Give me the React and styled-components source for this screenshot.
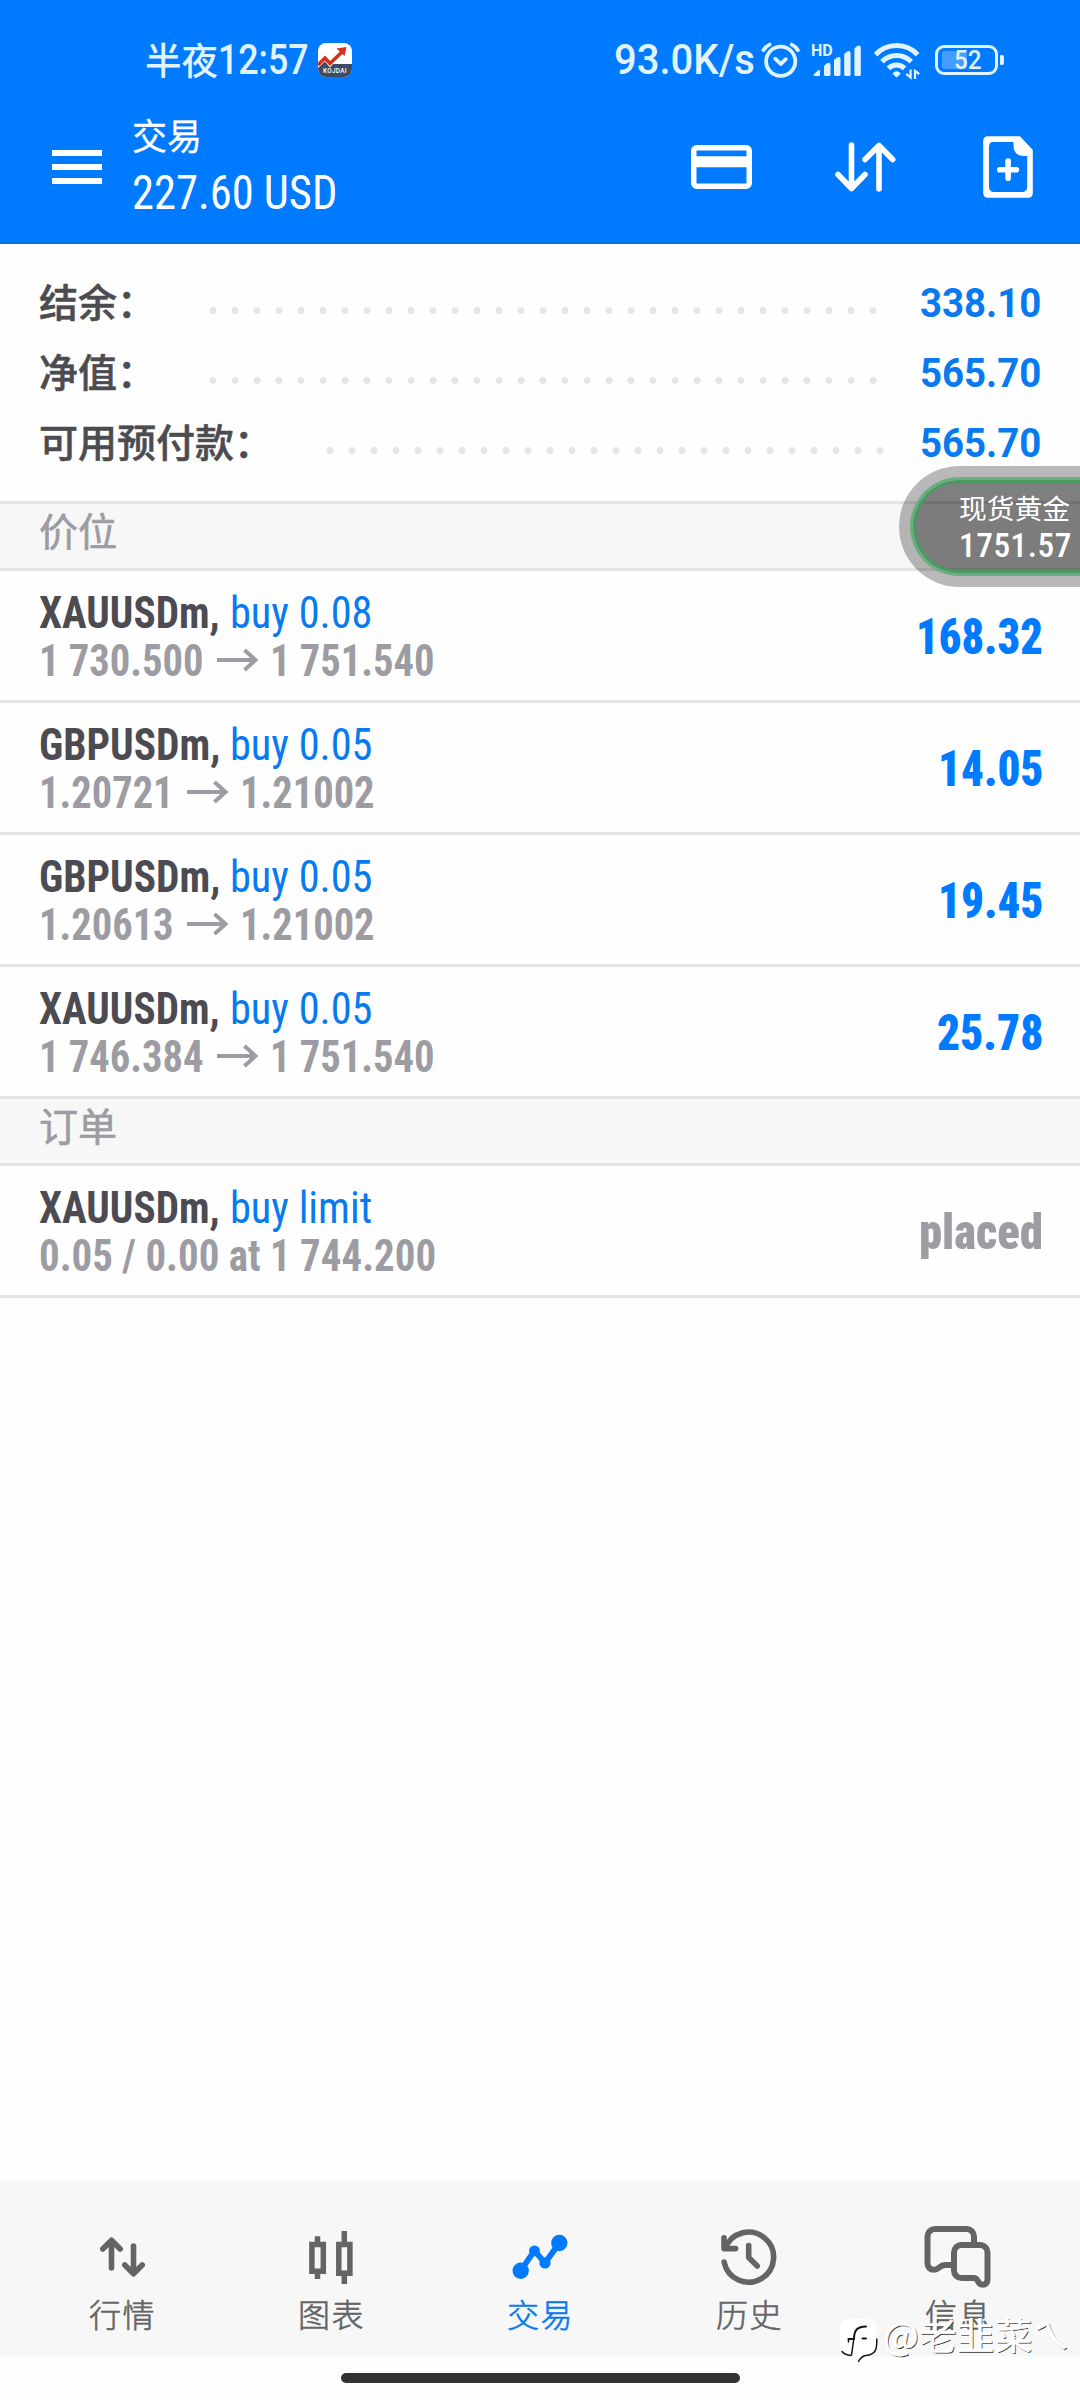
import React, { useLayoutEffect, useRef, useState } from "react";
import styled, { createGlobalStyle } from "styled-components";

const BLUE = "#007aff";
const INK_BLUE = "#087af0";
const GREY = "#9c9ca2";
const LINE = "#e4e4e4";
const PANEL = "#f7f7f7";
const CJK = `"Noto Sans CJK SC", sans-serif`;

const GlobalStyle = createGlobalStyle`
  * { box-sizing: border-box; }
  body { margin: 0; background: #fefefe; font-family: Roboto, ${CJK}; }
  svg { display: block; flex: none; overflow: visible; }
`;

const Screen = styled.div`
  position: relative;
  width: 1080px;
  height: 2400px;
  display: flex;
  flex-direction: column;
  overflow: hidden;
  background: #fefefe;
`;

/* Text that is squeezed or stretched horizontally to an exact width. */
const FitBox = styled.span`
  display: block;
  flex: none;
  width: ${(p) => p.$w}px;
  white-space: pre;
`;
const FitInner = styled.span`
  display: inline-block;
  transform-origin: 0 50%;
`;
function Fit({ w, children, as: Box = FitBox, ...rest }) {
  const ref = useRef(null);
  const [scale, setScale] = useState(1);
  useLayoutEffect(() => {
    setScale(w / ref.current.offsetWidth);
  }, [w, children]);
  return (
    <Box $w={w} {...rest}>
      <FitInner ref={ref} style={{ transform: `scaleX(${scale})` }}>{children}</FitInner>
    </Box>
  );
}

const Gap = styled.div`
  flex: none;
  width: ${(p) => p.$w}px;
`;
const Spacer = styled.div`
  flex: 1;
`;

const Header = styled.header`
  flex: none;
  height: 244px;
  background: ${BLUE};
  border-bottom: 2px solid #0d6fdc;
  color: #fff;
`;
const StatusBar = styled.div`
  display: flex;
  align-items: center;
  height: 100px;
  padding: 20px 82px 0 145px;
  color: #e0f3ff;
`;
const StatusCjk = styled(FitBox)`
  font: 500 37px/44px ${CJK};
  padding-bottom: 3px;
`;
const StatusLatin = styled(FitBox)`
  font-weight: 500;
  font-size: 42px;
  line-height: 44px;
  font-stretch: 90%;
  margin-right: ${(p) => p.$gap || 0}px;
`;
const Battery = styled.div`
  position: relative;
  width: 63px;
  height: 30px;
  margin-left: 14px;
  border: 3px solid #e0f3ff;
  border-radius: 9px;
  display: flex;
  justify-content: center;
  align-items: center;
  &::before {
    content: "";
    position: absolute;
    left: 4px;
    top: 3px;
    width: 25px;
    height: 18px;
    border-radius: 3px;
    background: rgba(255, 255, 255, 0.27);
  }
  &::after {
    content: "";
    position: absolute;
    left: 62px;
    top: 7px;
    width: 4px;
    height: 10px;
    border-radius: 1px 2px 2px 1px;
    background: #e0f3ff;
  }
`;
const BatteryText = styled(FitBox)`
  position: relative;
  left: 1px;
  font-weight: 500;
  font-size: 26px;
  line-height: 26px;
`;

const TitleBar = styled.div`
  display: flex;
  align-items: center;
  height: 134px;
  padding: 0 47px 0 52px;
`;
const MenuIcon = styled.div`
  display: flex;
  flex-direction: column;
  gap: 8px;
  width: 50px;
  margin-right: 30px;
  & > i {
    height: 6px;
    background: #fff;
  }
`;
const TitleText = styled.div`
  display: flex;
  flex-direction: column;
  gap: 11px;
  padding-top: 1px;
`;
const Title = styled(FitBox)`
  font: 400 36px/40px ${CJK};
  -webkit-text-stroke: 0.3px currentColor;
`;
const Amount = styled(FitBox)`
  font-weight: 450;
  font-size: 48px;
  line-height: 56px;
  font-stretch: 75%;
`;
const Actions = styled.div`
  display: flex;
  align-items: center;
  gap: 83px;
  margin-left: auto;
`;

const Summary = styled.section`
  flex: none;
  height: 257px;
  padding: 21px 39px 0;
`;
const SummaryRow = styled.div`
  display: flex;
  align-items: center;
  height: 70px;
`;
const SummaryLabel = styled.span`
  font: 500 39px/56px ${CJK};
  color: #4c4c50;
  -webkit-text-stroke: 0.5px currentColor;
  white-space: nowrap;
`;
const Dots = styled.span`
  flex: none;
  width: ${(p) => p.$count * 22}px;
  height: 7px;
  margin: 21px ${(p) => p.$gap}px 0 auto;
  background: radial-gradient(circle at 11px 3.5px, #e5e5e5 3.1px, transparent 3.9px) 0 0 / 22px 7px repeat-x;
`;
const SummaryValue = styled(FitBox)`
  padding-top: 7px;
  font-weight: 700;
  font-size: 40px;
  line-height: 48px;
  color: ${INK_BLUE};
`;

const SectionTitle = styled.h2`
  flex: none;
  margin: 0;
  height: ${(p) => (p.$first ? 70 : 67)}px;
  padding-left: 39px;
  border-top: ${(p) => (p.$first ? 3 : 0)}px solid ${LINE};
  border-bottom: 3px solid ${LINE};
  background: ${PANEL};
  font: 400 39px/50px ${CJK};
  color: ${GREY};
  -webkit-text-stroke: 0.6px currentColor;
`;

const Row = styled.div`
  flex: none;
  display: flex;
  justify-content: space-between;
  height: 132px;
  padding: 19px 37px 0 39px;
  border-bottom: 3px solid ${LINE};
  font-stretch: 75%;
`;
const Line = styled.div`
  display: flex;
  align-items: center;
  height: 48px;
  font-size: 43.5px;
  line-height: 48px;
`;
const Symbol = styled(FitBox)`
  font-weight: 700;
  color: #4b4b51;
`;
const Side = styled(FitBox)`
  margin-left: 10px;
  font-weight: 450;
  color: ${INK_BLUE};
`;
const Price = styled(FitBox)`
  font-weight: 700;
  color: ${GREY};
`;
const Profit = styled(FitBox)`
  height: 94px;
  font-weight: 900;
  font-size: 50px;
  line-height: 94px;
  color: ${(p) => (p.$muted ? GREY : BLUE)};
`;
const ArrowSvg = styled.svg`
  margin: 0 12px 5px 13px;
`;

const Bubble = styled.aside`
  position: absolute;
  right: 0;
  top: 466px;
  width: 181px;
  height: 121px;
  padding: 11px 0 11px 11px;
  border-radius: 61px 0 0 61px;
  background: rgba(0, 0, 0, 0.27);
`;
const BubbleRing = styled.div`
  height: 99px;
  border: 3px solid #6bae82;
  border-right: 0;
  border-radius: 50px 0 0 50px;
`;
const BubbleBody = styled.div`
  height: 93px;
  padding: 6px 0 0 43px;
  border: 3px solid #4b9863;
  border-right: 0;
  border-radius: 47px 0 0 47px;
  background: rgba(0, 0, 0, 0.31);
  color: #fff;
`;
const BubbleName = styled(FitBox)`
  font: 400 27.5px/36px ${CJK};
`;
const BubblePrice = styled(FitBox)`
  margin-top: 2px;
  font-weight: 500;
  font-size: 34px;
  line-height: 36px;
  font-stretch: 80%;
  letter-spacing: 0.5px;
`;

const Nav = styled.nav`
  flex: none;
  display: grid;
  grid-template-columns: repeat(5, 209px);
  justify-content: center;
  height: 175px;
  margin-top: auto;
  background: ${PANEL};
  box-shadow: 0 0 2px #f4f4f4;
`;
const NavItem = styled.a`
  display: flex;
  flex-direction: column;
  align-items: center;
  padding-top: 44px;
  color: ${(p) => (p.$active ? INK_BLUE : "#646464")};
`;
const NavLabel = styled.span`
  margin-top: 2px;
  font: 300 32px/44px ${CJK};
  letter-spacing: 1.5px;
  padding-left: 1px;
  -webkit-text-stroke: 0.6px currentColor;
`;
const HomeArea = styled.div`
  flex: none;
  height: 44px;
  padding-top: 17px;
`;
const HomeBar = styled.div`
  width: 399px;
  height: 10px;
  margin: 0 auto;
  border-radius: 5px;
  background: #323232;
`;

const Watermark = styled.div`
  position: absolute;
  left: 840px;
  top: 2318px;
  display: flex;
  align-items: flex-start;
  gap: 5px;
`;
const WatermarkText = styled(FitBox)`
  margin-top: -6px;
  font: 400 37px/44px ${CJK};
  color: #fff;
  -webkit-text-stroke: 0.5px #fff;
  text-shadow: 1px 1px 0 rgba(20, 20, 20, 0.9);
`;

const Alarm = () => (
  <svg width="42" height="40" fill="none" stroke="currentColor" strokeWidth="3.8" strokeLinecap="round" strokeLinejoin="round">
    <circle cx="20.7" cy="21.3" r="14.6" />
    <path d="M3.5 10.2Q5.5 6.5 9.5 4.6M31.8 4.6Q35.8 6.5 37.9 10.2M15.3 18.7L20.7 24L25.8 19.2" />
  </svg>
);
const HdText = styled.text`
  font: 700 16px Roboto, sans-serif;
`;
const Signal = () => (
  <svg width="54" height="40" fill="currentColor">
    <HdText x="1" y="16.3">HD</HdText>
    <path d="M3.5 34.5L8 30.5Q10 29.5 10 31V34.5Q10 36 8.5 36H5Q3.5 36 3.5 34.5zM14 26Q17 22.5 19 22.8Q20.5 23 20.5 25V34.5Q20.5 36 19 36H15.5Q14 36 14 34.5zM24 20Q27 16.8 29 17Q30.5 17 30.5 19V34.5Q30.5 36 29 36H25.5Q24 36 24 34.5zM34.2 14Q37 11 39 11Q40.6 11 40.6 13V34.5Q40.6 36 39 36H35.7Q34.2 36 34.2 34.5zM44.4 8.5Q47 5.6 49 5.6Q50.8 5.6 50.8 7.6V34.5Q50.8 36 49.3 36H46Q44.4 36 44.4 34.5z" />
  </svg>
);
const Wifi = () => (
  <svg width="48" height="40" fill="none" stroke="currentColor" strokeWidth="5">
    <path d="M2.6 14.8A28.4 28.4 0 0 1 44.6 14.8M9 21.8A20 20 0 0 1 38.2 21.8M15.4 28.4A11.6 11.6 0 0 1 31.6 28.4" />
    <path d="M19.5 33.4Q23.5 29 27.7 33.4L24.6 36.8Q23.5 37.6 22.5 36.8z" fill="currentColor" stroke="none" />
    <path d="M37.6 29.5V37.5L33.2 33.8M42 39V31L46.2 34" strokeWidth="2.2" />
  </svg>
);
const AppLogoText = styled.text`
  font: 500 6.4px Roboto, sans-serif;
  letter-spacing: 0.3px;
`;
const AppLogo = styled.svg`
  margin-left: 9px;
`;

const CardIcon = () => (
  <svg width="61" height="44" fill="none" stroke="#fff">
    <rect x="2.75" y="2.75" width="55.5" height="38.5" rx="3" strokeWidth="5.5" />
    <path d="M3 16.7H58" strokeWidth="11" />
  </svg>
);
const SortIcon = () => (
  <svg width="61" height="50" fill="none" stroke="#fff" strokeWidth="5.6" strokeLinecap="round" strokeLinejoin="round">
    <path d="M16.5 3V46M3 32.5L16.5 46.5L30 32.5M44 47V4M30 17.5L44 3.5L57.7 17.5" />
  </svg>
);
const FileIcon = styled(({ className }) => (
  <svg className={className} width="50" height="62" fill="none" stroke="#fff" strokeWidth="5.6" strokeLinecap="round" strokeLinejoin="round">
    <path d="M5 .3H37L49.8 14V57Q49.8 61.8 45 61.8H5Q.2 61.8 .2 57V5Q.2 .3 5 .3zM10 6Q6 6 6 11V50Q6 56 11 56H39Q44.2 56 44.2 50V20H41Q31 20 30.5 10V6z" fill="#fff" stroke="none" fillRule="evenodd" />
    <path d="M16.8 33.7H33.4M25.1 25V42.3" />
  </svg>
))`
  margin-left: 4px;
`;

const QuotesIcon = () => (
  <svg width="64" height="64" fill="none" stroke="currentColor" strokeWidth="5.6" strokeLinecap="round" strokeLinejoin="round">
    <path d="M21.5 43V15.5M12.8 24L21.5 15.2L30.2 24M43.5 21V48.5M34.8 40L43.5 48.8L52.2 40" />
  </svg>
);
const ChartIcon = () => (
  <svg width="64" height="64" fill="none" stroke="currentColor" strokeWidth="5.5">
    <path d="M12.9 19.5H24.3V46.2H12.9zM39.8 19.5H50.9V48.2H39.8z" />
    <path d="M18.5 11.3V18M18.5 48V54M45.3 6V18M45.3 50V59" />
  </svg>
);
const TradeIcon = () => (
  <svg width="64" height="64" fill={BLUE} stroke={BLUE}>
    <path d="M12.7 45.7L26.5 25.7L37 38L51.3 18" fill="none" strokeWidth="5.8" />
    <circle cx="12.7" cy="45.7" r="8.2" stroke="none" />
    <circle cx="26.5" cy="25.9" r="5.4" stroke="none" />
    <circle cx="37" cy="38" r="5.6" stroke="none" />
    <circle cx="51.3" cy="18" r="8.2" stroke="none" />
  </svg>
);
const HistoryIcon = () => (
  <svg width="64" height="64" fill="none" stroke="currentColor" strokeWidth="5.6" strokeLinecap="round" strokeLinejoin="round">
    <path d="M8.1 23.6A25 25 0 1 1 7.1 37M7 12.7V23.6H18.6M31.7 20.5V32.5L40.2 41" />
  </svg>
);
const ChatIcon = () => (
  <svg width="64" height="64" fill="none" stroke="currentColor" strokeWidth="6" strokeLinejoin="round">
    <path d="M28 40H19C13.5 40 13 44.8 8.2 44.8C4 44.8 1.5 42.5 1.5 38V11.5A7.5 7.5 0 0 1 9 4H40.5A7.5 7.5 0 0 1 48 11.5V20" />
    <path d="M35.5 20H54A7.5 7.5 0 0 1 61.5 27.5V54.5C61.5 58 59.5 59.8 56.8 59.8C50.5 59.8 53.5 53 47.5 53H35.5A7.5 7.5 0 0 1 28 45.5V27.5A7.5 7.5 0 0 1 35.5 20z" />
  </svg>
);
const WatermarkLogo = () => (
  <svg width="38" height="46" fill="none" stroke="#161616" strokeWidth="1.5" strokeLinecap="round">
    <path d="M12 1H26Q36.5 1 36.5 12V26Q36.5 38 25 38.5L18.500 44V38.5H12Q0 38 0 26V12Q0 1 12 1z" fill="#fff" stroke="none" />
    <path d="M14 20.5C14.200 12 17.500 8.5 26 8.5M8.500 21H14M22.500 20.5H26" strokeWidth="2" />
    <path d="M8.500 21V24M13.800 21L11.500 37M2 33.5Q5 37 11 37.500M36.800 21C37 31 36 36.500 26 37.500Q21.500 38 18.500 43.5" />
  </svg>
);

const summary = [
  { label: "结余：", value: "338.10", dots: 31, gap: 36.5 },
  { label: "净值：", value: "565.70", dots: 31, gap: 36.5 },
  { label: "可用预付款：", value: "565.70", dots: 26, gap: 29.5 },
];
const positions = [
  { symbol: "XAUUSDm,", side: "buy 0.08", from: "1 730.500", to: "1 751.540", pw: 165, profit: "168.32", w: 127 },
  { symbol: "GBPUSDm,", side: "buy 0.05", from: "1.20721", to: "1.21002", pw: 135, profit: "14.05", w: 105 },
  { symbol: "GBPUSDm,", side: "buy 0.05", from: "1.20613", to: "1.21002", pw: 135, profit: "19.45", w: 105 },
  { symbol: "XAUUSDm,", side: "buy 0.05", from: "1 746.384", to: "1 751.540", pw: 165, profit: "25.78", w: 106 },
];
const tabs = [
  { label: "行情", Icon: QuotesIcon },
  { label: "图表", Icon: ChartIcon },
  { label: "交易", Icon: TradeIcon, active: true },
  { label: "历史", Icon: HistoryIcon },
  { label: "信息", Icon: ChatIcon },
];

const PriceArrow = () => (
  <ArrowSvg width="41" height="22" fill="none" stroke={GREY} strokeWidth="4">
    <path d="M0 11H38M27.5 1L38.5 11L27.5 21" />
  </ArrowSvg>
);

export default function App() {
  return (
    <Screen>
      <GlobalStyle />
      <Header>
        <StatusBar>
          <Fit as={StatusCjk} w={73}>半夜</Fit>
          <Fit as={StatusLatin} w={91}>12:57</Fit>
          <AppLogo width="34" height="34">
            <clipPath id="logo"><rect width="34" height="34" rx="8" /></clipPath>
            <g clipPath="url(#logo)">
              <rect width="34" height="34" fill="#fff" />
              <path d="M0 22L7 15L12 20.5L24 9" fill="none" stroke="#d62f1c" strokeWidth="3.6" />
              <path d="M18.5 5.5L28.5 4L26.5 13z" fill="#d62f1c" />
              <path d="M0 25L7 18.5L12 24.5L15 21H34V34H0z" fill="#3d4c64" />
              <AppLogoText x="5" y="30" fill="#fff">KOJDAI</AppLogoText>
            </g>
          </AppLogo>
          <Spacer />
          <Fit as={StatusLatin} w={141} $gap={5}>93.0K/s</Fit>
          <Alarm />
          <Gap $w={8} />
          <Signal />
          <Gap $w={9} />
          <Wifi />
          <Battery>
            <Fit as={BatteryText} w={28}>52</Fit>
          </Battery>
        </StatusBar>
        <TitleBar>
          <MenuIcon><i /><i /><i /></MenuIcon>
          <TitleText>
            <Fit as={Title} w={70}>交易</Fit>
            <Fit as={Amount} w={205}>227.60 USD</Fit>
          </TitleText>
          <Actions>
            <CardIcon />
            <SortIcon />
            <FileIcon />
          </Actions>
        </TitleBar>
      </Header>

      <Summary>
        {summary.map((s) => (
          <SummaryRow key={s.label}>
            <SummaryLabel>{s.label}</SummaryLabel>
            <Dots $count={s.dots} $gap={s.gap} />
            <Fit as={SummaryValue} w={121}>{s.value}</Fit>
          </SummaryRow>
        ))}
      </Summary>

      <SectionTitle $first>价位</SectionTitle>
      {positions.map((p, i) => (
        <Row key={i}>
          <div>
            <Line>
              <Fit as={Symbol} w={181}>{p.symbol}</Fit>
              <Fit as={Side} w={142}>{p.side}</Fit>
            </Line>
            <Line>
              <Fit as={Price} w={p.pw}>{p.from}</Fit>
              <PriceArrow />
              <Fit as={Price} w={p.pw}>{p.to}</Fit>
            </Line>
          </div>
          <Fit as={Profit} w={p.w}>{p.profit}</Fit>
        </Row>
      ))}
      <SectionTitle>订单</SectionTitle>
      <Row>
        <div>
          <Line>
            <Fit as={Symbol} w={181}>XAUUSDm,</Fit>
            <Fit as={Side} w={142}>buy limit</Fit>
          </Line>
          <Line>
            <Fit as={Price} w={397}>0.05 / 0.00 at 1 744.200</Fit>
          </Line>
        </div>
        <Fit as={Profit} w={124} $muted>placed</Fit>
      </Row>

      <Bubble>
        <BubbleRing>
          <BubbleBody>
            <Fit as={BubbleName} w={111}>现货黄金</Fit>
            <Fit as={BubblePrice} w={113}>1751.57</Fit>
          </BubbleBody>
        </BubbleRing>
      </Bubble>

      <Nav>
        {tabs.map(({ label, Icon, active }) => (
          <NavItem key={label} $active={active}>
            <Icon />
            <NavLabel>{label}</NavLabel>
          </NavItem>
        ))}
      </Nav>
      <HomeArea><HomeBar /></HomeArea>

      <Watermark>
        <WatermarkLogo />
        <Fit as={WatermarkText} w={187}>@老韭菜ㄟ</Fit>
      </Watermark>
    </Screen>
  );
}
